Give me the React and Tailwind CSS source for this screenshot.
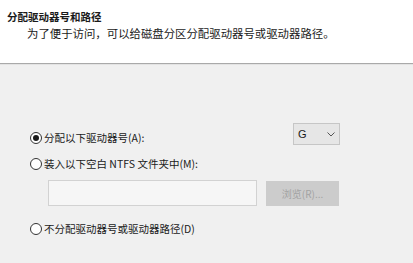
import React from "react";

const font = { fontFamily: '"Noto Sans CJK SC", "Microsoft YaHei", "Liberation Sans", sans-serif' };

function Radio({ checked }) {
  return (
    <span className="flex h-[12px] w-[12px] shrink-0 items-center justify-center rounded-full border border-[#333333] bg-white">
      {checked && <span className="h-[6px] w-[6px] rounded-full bg-[#1a1a1a]" />}
    </span>
  );
}

export default function App() {
  return (
    <div className="flex h-[263px] w-[413px] flex-col overflow-hidden bg-[#f0f0f0] text-[#1a1a1a]" style={font}>
      <div className="h-[64px] shrink-0 border-b border-[#a9a9a9] bg-white pl-[7px] pt-[9px]">
        <div className="text-[10.5px] font-bold leading-[15px]">分配驱动器号和路径</div>
        <div className="pl-[20px] pt-[2px] text-[11.4px] leading-[15px]">为了便于访问，可以给磁盘分区分配驱动器号或驱动器路径。</div>
      </div>
      <div className="border-t border-[#e3e3e3]" />
      <div className="flex flex-col pl-[30px] pt-[58px]">
        <div className="flex w-[310px] items-start justify-between">
          <div className="mt-[8px] flex h-[14px] items-center gap-[2px]">
            <Radio checked />
            <span className="text-[10.5px] leading-[14px]">分配以下驱动器号(A):</span>
          </div>
          <div className="flex h-[22px] w-[47px] items-center justify-between border border-[#c6c6c6] bg-[#e6e6e6] pl-[4px] pr-[4px]">
            <span className="text-[11px] leading-none" style={{ fontFamily: '"Liberation Sans", sans-serif' }}>G</span>
            <svg width="8" height="5" viewBox="0 0 8 5" fill="none">
              <path d="M0.5 0.5 L4 4 L7.5 0.5" stroke="#555" strokeWidth="1" />
            </svg>
          </div>
        </div>
        <div className="mt-[12px] flex h-[14px] items-center gap-[2px]">
          <Radio />
          <span className="text-[10.5px] leading-[14px]">装入以下空白 NTFS 文件夹中(M):</span>
        </div>
        <div className="ml-[18px] mt-[9px] flex items-start gap-[9px]">
          <div className="h-[26px] w-[209px] border border-[#d2d2d2] bg-[#f6f6f6]" />
          <div className="mt-[1px] flex h-[25px] w-[73px] items-center justify-center bg-[#cccccc] text-[10px] text-[#a3a3a3]">浏览(R)...</div>
        </div>
        <div className="mt-[16px] flex h-[14px] items-center gap-[2px]">
          <Radio />
          <span className="text-[10.5px] leading-[14px]">不分配驱动器号或驱动器路径(D)</span>
        </div>
      </div>
    </div>
  );
}
